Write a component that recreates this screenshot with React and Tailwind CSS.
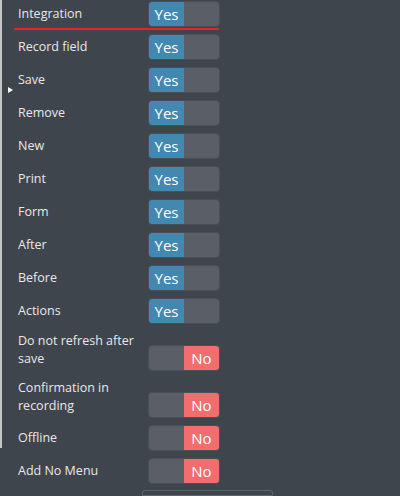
const yesItems = [
  "Integration",
  "Record field",
  "Save",
  "Remove",
  "New",
  "Print",
  "Form",
  "After",
  "Before",
  "Actions",
];

const noItems = [
  { label: "Do not refresh after save", wrap: true },
  { label: "Confirmation in recording", wrap: true },
  { label: "Offline" },
  { label: "Add No Menu" },
];

function Toggle({ on }) {
  return (
    <div className="flex h-[26px] w-[72px] shrink-0 overflow-hidden rounded-[4px] border border-[#4b5058] text-[15px] leading-none text-white">
      <div
        className={
          on
            ? "flex w-[35px] items-center justify-center bg-[#4288b0]"
            : "w-[35px] bg-[#5a5f67]"
        }
      >
        {on && "Yes"}
      </div>
      <div
        className={
          on
            ? "flex-1 bg-[#5a5f67]"
            : "flex flex-1 items-center justify-center bg-[#f26d6d]"
        }
      >
        {!on && "No"}
      </div>
    </div>
  );
}

export default function App() {
  return (
    <div
      className="relative flex h-[496px] w-[400px] overflow-hidden bg-[#3f454d] text-[#e8e8e8]"
      style={{ fontFamily: '"Open Sans", "Noto Sans", sans-serif' }}
    >
      <div className="h-[448px] w-[2px] shrink-0 bg-[#c5c5c5]" />

      {/* selected-row marker */}
      <div className="absolute left-[8px] top-[87px] h-0 w-0 border-y-[3px] border-l-[5px] border-y-transparent border-l-white" />

      <div className="ml-[12px] flex flex-col pt-[1px]">
        {yesItems.map((label, i) => (
          <div key={label}>
            <div className={`flex items-center ${i === 0 ? "" : "mt-[7px]"}`}>
              <span className="w-[134px] pl-[4px] text-[12.5px] leading-[18px]">
                {label}
              </span>
              <Toggle on />
            </div>
            {i === 0 && (
              <div className="-mb-[3px] mt-[1px] h-[2px] w-[205px] bg-[#e3242b]" />
            )}
          </div>
        ))}

        {noItems.map((item) =>
          item.wrap ? (
            <div key={item.label} className="mt-[7px] flex items-start">
              <span className="w-[134px] pl-[4px] pr-[8px] pt-[1px] text-[12.5px] leading-[18px]">
                {item.label}
              </span>
              <div className="mt-[14px]">
                <Toggle on={false} />
              </div>
            </div>
          ) : (
            <div key={item.label} className="mt-[7px] flex items-center">
              <span className="w-[134px] pl-[4px] text-[12.5px] leading-[18px]">
                {item.label}
              </span>
              <Toggle on={false} />
            </div>
          )
        )}

        <div className="ml-[128px] mt-[6px] h-[30px] w-[131px] rounded-t-[3px] border border-[#5e646c]" />
      </div>
    </div>
  );
}
